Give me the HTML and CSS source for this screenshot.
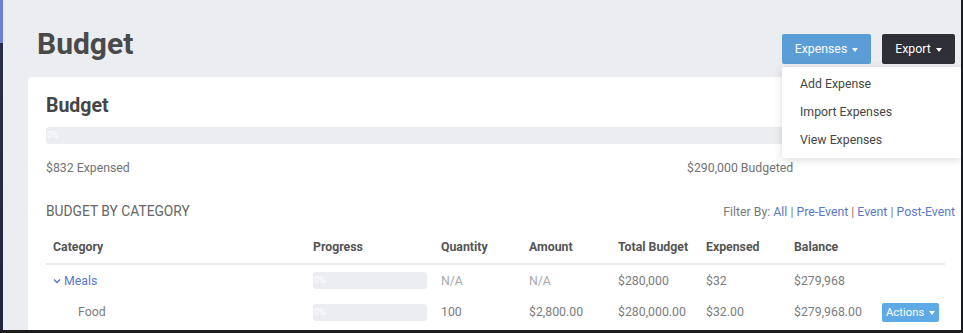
FILE: index.html
```html
<!DOCTYPE html>
<html lang="en">
<head>
    <meta charset="UTF-8">
    <meta name="viewport" content="width=device-width, initial-scale=1.0">
    <title>Budget</title>
    <link rel="stylesheet" href="styles.css">
</head>
<body>
    <div class="frame">
        <div class="rail"></div>

        <div class="page">
            <div class="page-header">
                <h1 class="page-title">Budget</h1>
                <div class="page-actions">
                    <div class="btn-group">
                        <button type="button" class="btn btn-blue">Expenses <span class="caret"></span></button>
                        <ul class="dropdown">
                            <li>Add Expense</li>
                            <li>Import Expenses</li>
                            <li>View Expenses</li>
                        </ul>
                    </div>
                    <button type="button" class="btn btn-dark">Export <span class="caret"></span></button>
                </div>
            </div>

            <div class="card">
                <h3 class="card-title">Budget</h3>
                <div class="progress"><span>0%</span></div>

                <div class="totals">
                    <span>$832 Expensed</span>
                    <span>$290,000 Budgeted</span>
                </div>

                <div class="section-head">
                    <span class="section-title">Budget by Category</span>
                    <span class="filter">Filter By: <a href="#">All</a> | <a href="#">Pre-Event</a> | <a href="#">Event</a> | <a href="#">Post-Event</a></span>
                </div>

                <table class="budget-table">
                    <colgroup>
                        <col class="col-category">
                        <col class="col-progress">
                        <col class="col-num">
                        <col class="col-amount">
                        <col class="col-num">
                        <col class="col-num">
                        <col class="col-num">
                        <col>
                    </colgroup>
                    <thead>
                        <tr>
                            <th>Category</th>
                            <th>Progress</th>
                            <th>Quantity</th>
                            <th>Amount</th>
                            <th>Total Budget</th>
                            <th>Expensed</th>
                            <th>Balance</th>
                            <th></th>
                        </tr>
                    </thead>
                    <tbody>
                        <tr>
                            <td>
                                <a href="#" class="cat-link">
                                    <svg width="8" height="6" viewBox="0 0 8 6"><path d="M1 1.5 L4 4.5 L7 1.5" fill="none" stroke="currentColor" stroke-width="1.4"/></svg>
                                    Meals
                                </a>
                            </td>
                            <td><div class="mini-bar"><span>0%</span></div></td>
                            <td class="muted">N/A</td>
                            <td class="muted">N/A</td>
                            <td>$280,000</td>
                            <td>$32</td>
                            <td>$279,968</td>
                            <td></td>
                        </tr>
                        <tr>
                            <td class="sub">Food</td>
                            <td><div class="mini-bar"><span>0%</span></div></td>
                            <td>100</td>
                            <td>$2,800.00</td>
                            <td>$280,000.00</td>
                            <td>$32.00</td>
                            <td>$279,968.00</td>
                            <td><button type="button" class="btn-actions">Actions <span class="caret"></span></button></td>
                        </tr>
                    </tbody>
                </table>
            </div>
        </div>

        <div class="edge"></div>
        <div class="bottom-bar"></div>
    </div>
</body>
</html>
```

FILE: styles.css
```css
* {
    margin: 0;
    padding: 0;
    box-sizing: border-box;
    font-family: Roboto, "Liberation Sans", sans-serif;
}

body {
    background-color: #1d1e22;
    width: 963px;
    height: 333px;
    overflow: hidden;
}

/* screenshot frame: left rail, right edge and bottom bar */
.frame {
    display: grid;
    grid-template-columns: 3px 1fr 2px;
    grid-template-rows: 330px 3px;
    height: 333px;
}

.rail {
    background: linear-gradient(to bottom, #6f7ed6 0, #6f7ed6 43px, #2b2e47 43px, #23253a 100%);
}

.edge {
    background-color: #1b1c20;
}

.bottom-bar {
    grid-column: 1 / -1;
    background-color: #1c1c1f;
}

.page {
    background-color: #ebedf0;
    padding-left: 25px;
    overflow: hidden;
}

.page-header {
    display: flex;
    justify-content: space-between;
    align-items: flex-start;
    height: 77px;
    padding: 24px 6px 0 9px;
}

.page-title {
    font-size: 30px;
    font-weight: 700;
    color: #4a4a4a;
    line-height: 40px;
}

.page-actions {
    display: flex;
    gap: 11px;
    margin-top: 10px;
}

.btn-group {
    position: relative;
}

.btn {
    height: 30px;
    border: none;
    border-radius: 2px;
    color: #fff;
    font-size: 12.3px;
    cursor: pointer;
}

.btn-blue {
    width: 89px;
    background-color: #5b9dd6;
}

.btn-dark {
    width: 73px;
    background-color: #2f2f38;
}

.caret {
    display: inline-block;
    width: 0;
    height: 0;
    margin-left: 2px;
    vertical-align: middle;
    border-top: 4px solid currentColor;
    border-left: 3.5px solid transparent;
    border-right: 3.5px solid transparent;
}

.dropdown {
    position: absolute;
    top: 33px;
    left: 0;
    width: 179px;
    padding: 3px 0 4px;
    list-style: none;
    background-color: #fff;
    border-radius: 2px;
    box-shadow: 0 2px 8px rgba(0, 0, 0, 0.15);
    z-index: 5;
}

.dropdown li {
    height: 28px;
    line-height: 28px;
    padding-left: 18px;
    font-size: 12.3px;
    color: #454545;
}

.card {
    background-color: #fff;
    border-radius: 4px 0 0 0;
    padding: 17px 16px 0 18px;
    height: 100%;
}

.card-title {
    font-size: 19.5px;
    font-weight: 700;
    color: #454545;
    line-height: 23px;
}

.progress {
    height: 17px;
    margin-top: 10px;
    background-color: #ebedf0;
    border-radius: 3px;
    font-size: 9px;
    color: #fff;
    line-height: 17px;
    padding-left: 1px;
}

.totals {
    display: grid;
    grid-template-columns: 641px 1fr;
    margin-top: 15px;
    font-size: 12.3px;
    line-height: 18px;
    color: #737373;
}

.section-head {
    display: flex;
    justify-content: space-between;
    align-items: baseline;
    margin: 24px -10px 0 0;
    line-height: 20px;
}

.section-title {
    font-size: 13.8px;
    text-transform: uppercase;
    color: #666;
}

.filter {
    font-size: 12.3px;
    color: #7a7a7a;
}

.filter a {
    color: #5a78cc;
    text-decoration: none;
}

.budget-table {
    width: 100%;
    margin-top: 9px;
    border-collapse: collapse;
    table-layout: fixed;
}

.col-category { width: 260px; }
.col-progress { width: 128px; }
.col-num { width: 88px; }
.col-amount { width: 89px; }

.budget-table th {
    height: 33px;
    padding: 0 7px;
    text-align: left;
    font-size: 12.3px;
    font-weight: 700;
    color: #555;
    border-bottom: 2px solid #e9ebee;
}

.budget-table td {
    height: 32px;
    padding: 0 7px;
    font-size: 12.3px;
    color: #7c7c7c;
    white-space: nowrap;
}

.budget-table td.muted {
    color: #a8a8a8;
}

.budget-table td.sub {
    padding-left: 32px;
}

.cat-link {
    display: inline-flex;
    align-items: center;
    gap: 3px;
    color: #5a78cc;
    text-decoration: none;
}

.mini-bar {
    width: 114px;
    height: 17px;
    background-color: #ebedf0;
    border-radius: 3px;
    font-size: 9px;
    line-height: 17px;
    color: #fff;
    padding-left: 1px;
}

.btn-actions {
    width: 57px;
    height: 19px;
    border: none;
    border-radius: 2px;
    background-color: #5daae6;
    color: #fff;
    font-size: 11.3px;
    cursor: pointer;
}
```
